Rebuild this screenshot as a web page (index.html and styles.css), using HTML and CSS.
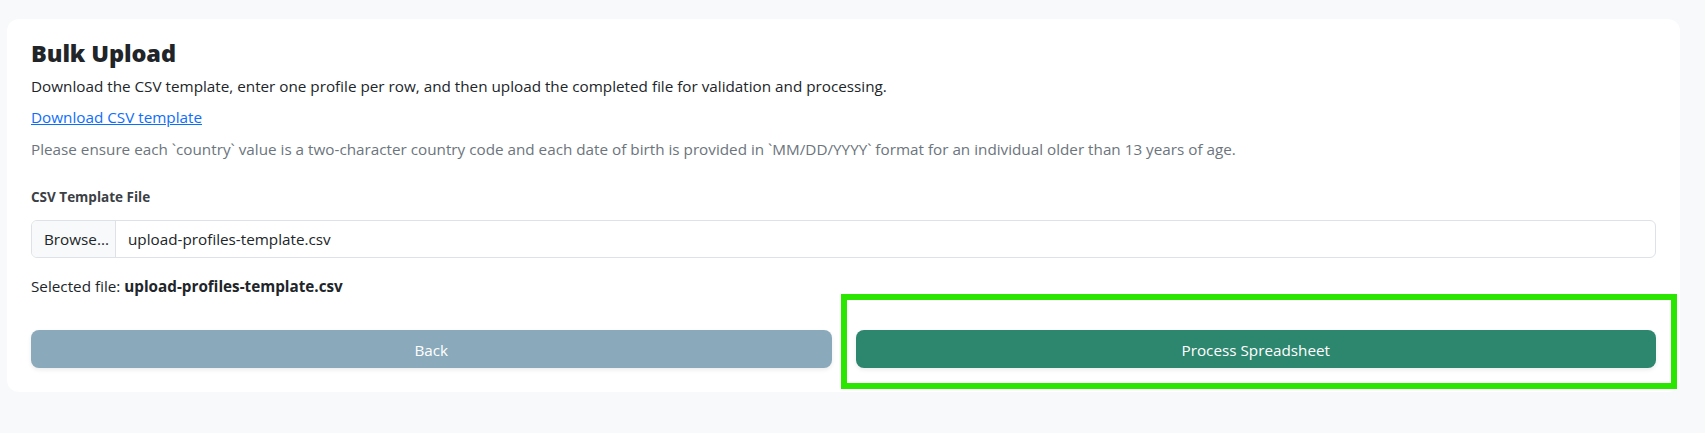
FILE: index.html
```html
<!DOCTYPE html>
<html lang="en">
<head>
<meta charset="utf-8">
<title>Bulk Upload</title>
<link rel="stylesheet" href="styles.css">
</head>
<body>
  <main class="card">
    <h1 class="title">Bulk Upload</h1>
    <p class="lead">Download the CSV template, enter one profile per row, and then upload the completed file for validation and processing.</p>
    <p class="link-row"><a href="#" class="template-link">Download CSV template</a></p>
    <p class="hint">Please ensure each `country` value is a two-character country code and each date of birth is provided in `MM/DD/YYYY` format for an individual older than 13 years of age.</p>

    <label class="field-label" for="csvFile">CSV Template File</label>
    <div class="file-input" id="csvFile">
      <span class="file-browse">Browse...</span>
      <span class="file-name">upload-profiles-template.csv</span>
    </div>

    <p class="selected">Selected file: <strong>upload-profiles-template.csv</strong></p>

    <div class="actions">
      <div class="btn-wrap">
        <button class="btn btn-back" type="button">Back</button>
      </div>
      <div class="btn-wrap">
        <button class="btn btn-process" type="button">Process Spreadsheet</button>
        <span class="highlight" aria-hidden="true"></span>
      </div>
    </div>
  </main>
</body>
</html>
```

FILE: styles.css
```css
* {
  box-sizing: border-box;
}

html, body {
  margin: 0;
  height: 100%;
}

body {
  background: #f8f9fa;
  padding: 19px 25px 0 7px;
  font-family: "Open Sans", "Noto Sans", "Liberation Sans", sans-serif;
  font-size: 15.25px;
  line-height: 24px;
  color: #212529;
}

.card {
  background: #ffffff;
  border-radius: 12px;
  padding: 20px 24px 24px;
}

.title {
  margin: 0 0 6px;
  font-size: 23.5px;
  line-height: 29px;
  font-weight: 800;
  color: #212529;
  letter-spacing: -0.1px;
}

.lead {
  margin: 0 0 7px;
}

.link-row {
  margin: 0 0 8px;
}

.template-link {
  color: #0d6efd;
  text-decoration: underline;
}

.hint {
  margin: 0 0 26px;
  color: #6c757d;
}

.field-label {
  display: block;
  margin: 0 0 12px;
  font-size: 13.5px;
  line-height: 21px;
  font-weight: 700;
  color: #3b4045;
}

.file-input {
  display: flex;
  height: 38px;
  border: 1px solid #dee2e6;
  border-radius: 6px;
  overflow: hidden;
  background: #ffffff;
}

.file-browse {
  flex: 0 0 84px;
  padding: 6px 0 6px 12px;
  background: #f8f9fa;
  border-right: 1px solid #dee2e6;
  color: #212529;
  white-space: nowrap;
  overflow: hidden;
}

.file-name {
  padding: 6px 12px;
  color: #212529;
}

.selected {
  margin: 16px 0 32px;
}

.selected strong {
  font-weight: 700;
}

.actions {
  display: grid;
  grid-template-columns: 1fr 1fr;
  gap: 24px;
}

.btn-wrap {
  position: relative;
}

.btn {
  display: block;
  width: 100%;
  height: 38px;
  border: 0;
  border-radius: 8px;
  padding: 8px 12px 6px;
  font-family: inherit;
  font-size: 15.25px;
  line-height: 24px;
  color: #ffffff;
  text-align: center;
  box-shadow: 0 2px 4px rgba(0, 0, 0, 0.08);
}

.btn-back {
  background: #8aaabb;
}

.btn-process {
  background: #2d866e;
}

.highlight {
  position: absolute;
  left: -15px;
  top: -36px;
  right: -21px;
  bottom: -21px;
  border: 6px solid #2ae600;
  pointer-events: none;
}
```
